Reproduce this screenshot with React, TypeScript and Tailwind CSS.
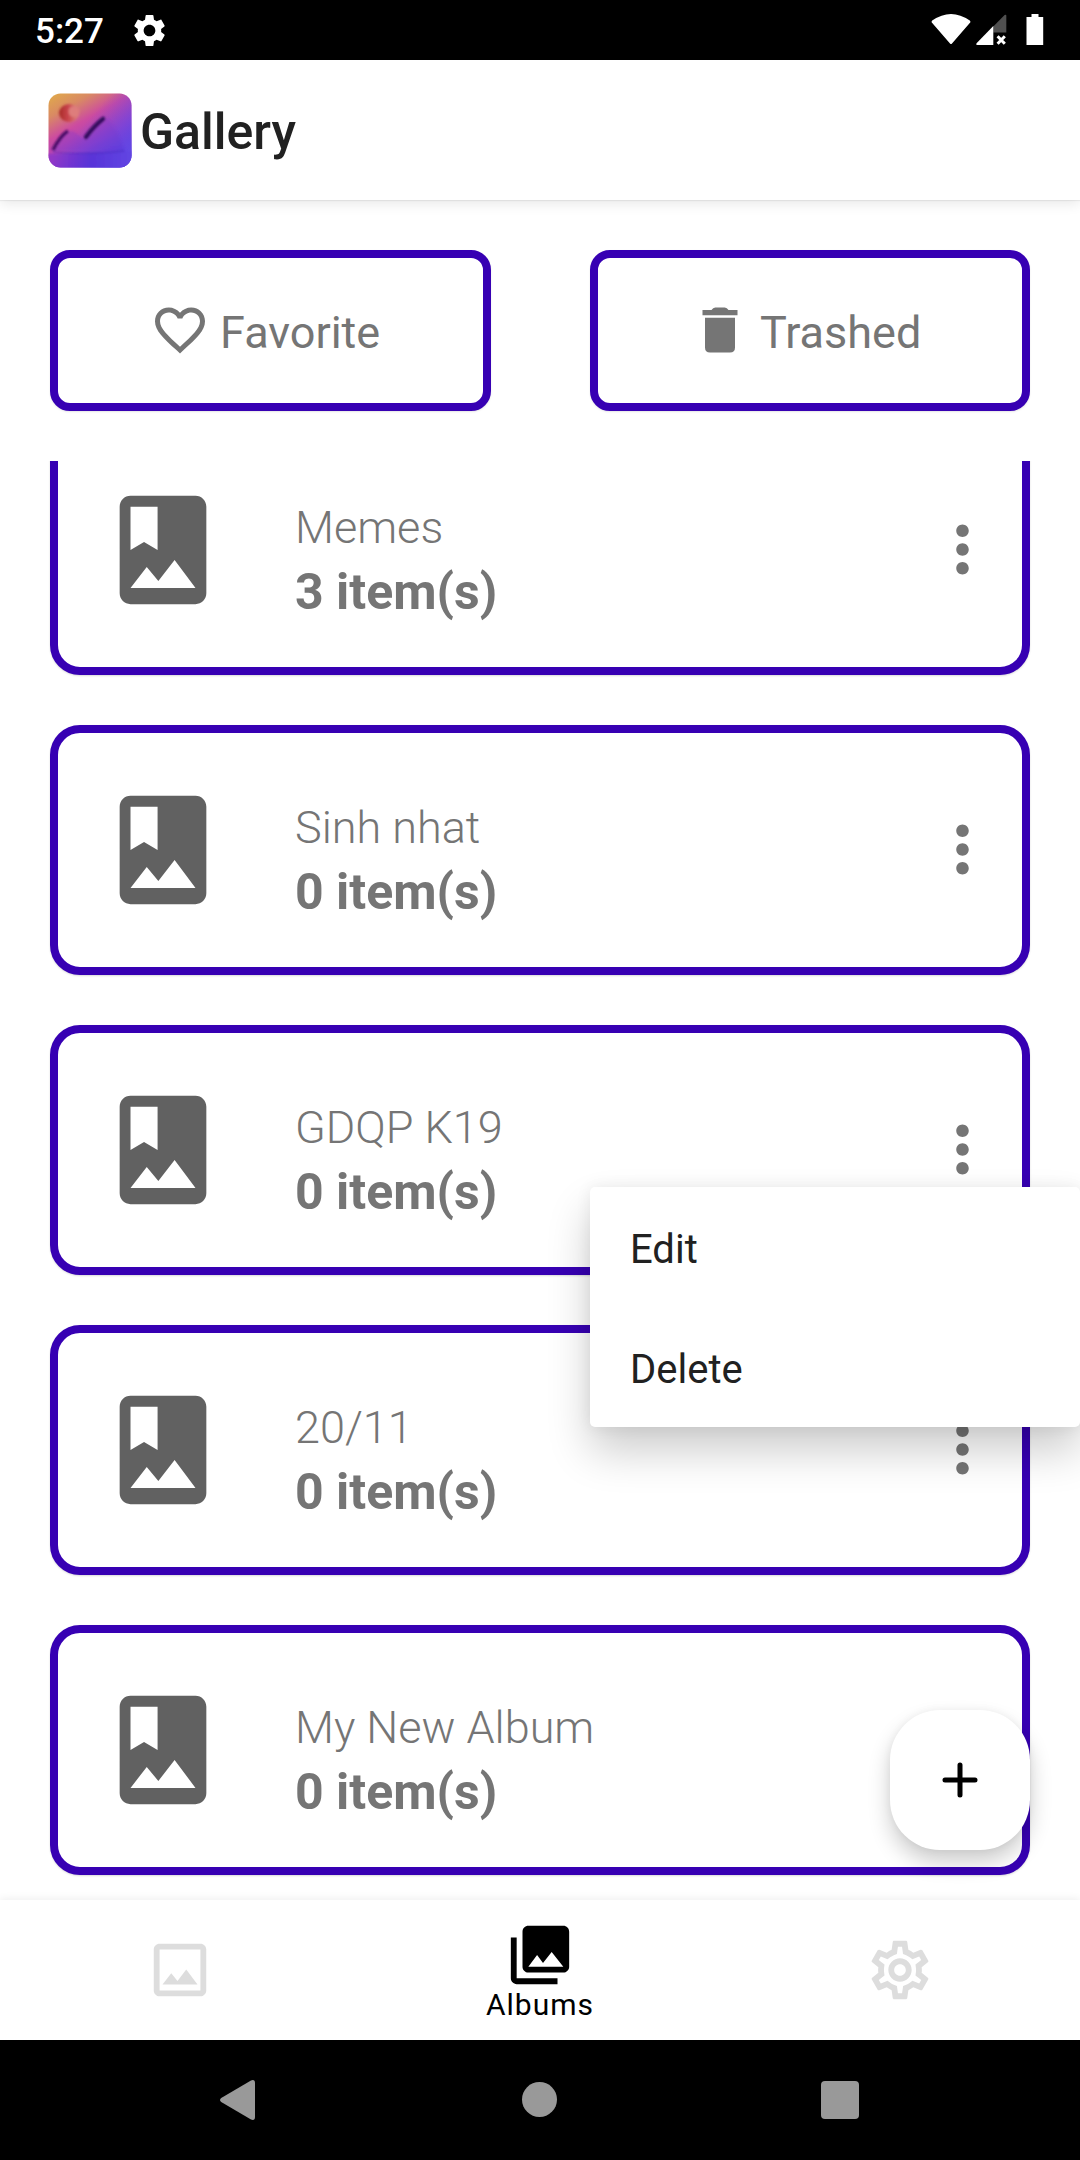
import type { ReactNode } from "react";

const albums = [
  { name: "Memes", count: 3 },
  { name: "Sinh nhat", count: 0 },
  { name: "GDQP K19", count: 0 },
  { name: "20/11", count: 0 },
  { name: "My New Album", count: 0 },
];

const GEAR =
  "M19.14 12.94c.04-.3.06-.61.06-.94 0-.32-.02-.64-.07-.94l2.03-1.58c.18-.14.23-.41.12-.61l-1.92-3.32c-.12-.22-.37-.29-.59-.22l-2.39.96c-.5-.38-1.03-.7-1.62-.94l-.36-2.54c-.04-.24-.24-.41-.48-.41h-3.84c-.24 0-.43.17-.47.41l-.36 2.54c-.59.24-1.13.57-1.62.94l-2.39-.96c-.22-.08-.47 0-.59.22L2.74 8.87c-.12.21-.08.47.12.61l2.03 1.58c-.05.3-.09.63-.09.94s.02.64.07.94l-2.03 1.58c-.18.14-.23.41-.12.61l1.92 3.32c.12.22.37.29.59.22l2.39-.96c.5.38 1.03.7 1.62.94l.36 2.54c.05.24.24.41.48.41h3.84c.24 0 .44-.17.47-.41l.36-2.54c.59-.24 1.13-.56 1.62-.94l2.39.96c.22.08.47 0 .59-.22l1.92-3.32c.12-.22.07-.47-.12-.61l-2.01-1.58zM12 15.6c-1.98 0-3.6-1.62-3.6-3.6s1.62-3.6 3.6-3.6 3.6 1.62 3.6 3.6-1.62 3.6-3.6 3.6z";

const GEAR_OUTLINE =
  "M19.43 12.98c.04-.32.07-.64.07-.98 0-.34-.03-.66-.07-.98l2.11-1.65c.19-.15.24-.42.12-.64l-2-3.46c-.09-.16-.26-.25-.44-.25-.06 0-.12.01-.17.03l-2.49 1c-.52-.4-1.08-.73-1.69-.98l-.38-2.65C14.46 2.18 14.25 2 14 2h-4c-.25 0-.46.18-.49.42l-.38 2.65c-.61.25-1.17.59-1.69.98l-2.49-1c-.06-.02-.12-.03-.18-.03-.17 0-.34.09-.43.25l-2 3.46c-.13.22-.07.49.12.64l2.11 1.65c-.04.32-.07.65-.07.98 0 .33.03.66.07.98l-2.11 1.65c-.19.15-.24.42-.12.64l2 3.46c.09.16.26.25.44.25.06 0 .12-.01.17-.03l2.49-1c.52.4 1.08.73 1.69.98l.38 2.65c.03.24.24.42.49.42h4c.25 0 .46-.18.49-.42l.38-2.65c.61-.25 1.17-.59 1.69-.98l2.49 1c.06.02.12.03.18.03.17 0 .34-.09.43-.25l2-3.46c.12-.22.07-.49-.12-.64l-2.11-1.65zm-1.98-1.71c.04.31.05.52.05.73 0 .21-.02.43-.05.73l-.14 1.13.89.7 1.08.84-.7 1.21-1.27-.51-1.04-.42-.9.68c-.43.32-.84.56-1.25.73l-1.06.43-.16 1.13-.2 1.35h-1.4l-.19-1.35-.16-1.13-1.06-.43c-.43-.18-.83-.41-1.23-.71l-.91-.7-1.06.43-1.27.51-.7-1.21 1.08-.84.89-.7-.14-1.13c-.03-.31-.05-.54-.05-.74s.02-.43.05-.73l.14-1.13-.89-.7-1.08-.84.7-1.21 1.27.51 1.04.42.9-.68c.43-.32.84-.56 1.25-.73l1.06-.43.16-1.13.2-1.35h1.39l.19 1.35.16 1.13 1.06.43c.43.18.83.41 1.23.71l.91.7 1.06-.43 1.27-.51.7 1.21-1.07.85-.89.7.14 1.13zM12 8c-2.21 0-4 1.79-4 4s1.79 4 4 4 4-1.79 4-4-1.79-4-4-4zm0 6c-1.1 0-2-.9-2-2s.9-2 2-2 2 .9 2 2-.9 2-2 2z";

function Icon({ className, children }: { className: string; children: ReactNode }) {
  return (
    <svg viewBox="0 0 24 24" fill="currentColor" className={`block shrink-0 ${className}`}>
      {children}
    </svg>
  );
}

function StatusBar() {
  return (
    <div className="flex h-[60px] items-center bg-black pl-[35px] pr-[36px] text-white">
      <span className="pt-[3px] text-[35px] font-medium leading-[40px]">5:27</span>
      <Icon className="ml-[26px] h-[39px] w-[39px]">
        <path d={GEAR} />
      </Icon>
      <div className="ml-auto flex items-center">
        <svg viewBox="0 0 40 32" className="h-8 w-10 fill-white">
          <path d="M1.2 6.6Q20-6.6 38.8 6.6Q39.8 7.6 39.2 8.600L21 29.400Q20 30.600 19 29.400L0.8 8.600Q0.2 7.600 1.2 6.600Z" />
        </svg>
        <svg viewBox="0 0 32 32" className="ml-[5px] h-8 w-8">
          <path d="M17.3 12.400L28.6 1Q30.3 0 30.3 1.800V18.600H17.3Z" fill="#505050" />
          <path d="M17.3 12V31H1.5Q-.8 31 .8 29Z" fill="#fff" />
          <path d="M21.6 22.300L28.800 29.700M28.800 22.300L21.600 29.700" stroke="#fff" strokeWidth="3" />
        </svg>
        <svg viewBox="0 0 18 32" className="ml-[18px] h-8 w-[18px] fill-white">
          <path d="M5.5 0h7v3h4.7v28H.5V3h5Z" />
        </svg>
      </div>
    </div>
  );
}

function AppLogo() {
  return (
    <svg viewBox="0 0 84 75" className="block h-[75px] w-[84px]">
      <defs>
        <linearGradient id="base" x1="0.08" y1="0" x2="0.72" y2="1">
          <stop offset="0" stopColor="#e0a84c" />
          <stop offset="0.2" stopColor="#d98a63" />
          <stop offset="0.42" stopColor="#cc4ba0" />
          <stop offset="0.68" stopColor="#a03fc4" />
          <stop offset="1" stopColor="#5430da" />
        </linearGradient>
        <linearGradient id="cool" x1="0.35" y1="0.25" x2="1" y2="0.75">
          <stop offset="0.2" stopColor="#6a45e0" stopOpacity="0" />
          <stop offset="1" stopColor="#6348e4" />
        </linearGradient>
        <linearGradient id="ground" x1="0" y1="0" x2="1" y2="0">
          <stop offset="0" stopColor="#8f35c8" />
          <stop offset="0.5" stopColor="#4f2ed6" />
          <stop offset="1" stopColor="#6346e2" />
        </linearGradient>
        <linearGradient id="hill" x1="0" y1="0" x2="1" y2="1">
          <stop offset="0" stopColor="#b63fb8" />
          <stop offset="1" stopColor="#5238dc" />
        </linearGradient>
        <linearGradient id="ball" x1="0" y1="0" x2="1" y2="0">
          <stop offset="0" stopColor="#a82a28" />
          <stop offset="0.45" stopColor="#c9444c" />
          <stop offset="1" stopColor="#e08a84" />
        </linearGradient>
        <filter id="soft" x="-30%" y="-30%" width="160%" height="160%">
          <feGaussianBlur stdDeviation="1.2" />
        </filter>
        <clipPath id="tile">
          <rect x="0.5" y="0.5" width="83" height="74" rx="12" />
        </clipPath>
      </defs>
      <g clipPath="url(#tile)">
        <rect width="84" height="75" fill="url(#base)" />
        <rect width="84" height="75" fill="url(#cool)" />
        <g filter="url(#soft)">
          <path d="M4 58C12 46 17 37 23 38C29 39 32 45 37 46C44 38 52 25 58 25C65 27 72 45 78 59Z" fill="url(#hill)" opacity="0.45" />
          <path d="M-4 61Q40 60 88 58V80H-4Z" fill="url(#ground)" opacity="0.7" />
          <path d="M5 59Q40 62 76 58" stroke="#4326b8" strokeWidth="1.5" fill="none" opacity="0.5" />
          <path d="M5 57Q12 43 20 38" stroke="#4c0f68" strokeWidth="3.6" fill="none" />
          <path d="M38 44Q46 33 55 26" stroke="#35105f" strokeWidth="4.6" strokeLinecap="round" fill="none" />
          <ellipse cx="21" cy="20" rx="10" ry="9" fill="url(#ball)" />
          <circle cx="26" cy="18.500" r="5.500" fill="#de7d7c" />
        </g>
      </g>
    </svg>
  );
}

function Shortcut({ label, className, children }: { label: string; className: string; children: ReactNode }) {
  return (
    <button
      className={`flex h-[161px] items-center rounded-[20px] border-8 border-[#3700b3] bg-white pl-[92px] text-[#757575] shadow-[0_1px_2px_rgba(0,0,0,0.1)] ${className}`}
    >
      <Icon className="-mt-[2px] h-[60px] w-[60px]">{children}</Icon>
      <span className="ml-[10px] pt-[4px] text-[45px] leading-[60px]">{label}</span>
    </button>
  );
}

function AlbumCard({ name, count }: { name: string; count: number }) {
  return (
    <div className="flex h-[250px] shrink-0 rounded-[30px] border-8 border-[#3700b3] bg-white pl-[40px] pr-[22px] text-[#757575] shadow-[0_1px_2px_rgba(0,0,0,0.15)]">
      <Icon className="mt-[52px] h-[130px] w-[130px] text-[#616161]">
        <path d="M18 2H6c-1.1 0-2 .9-2 2v16c0 1.1.9 2 2 2h12c1.1 0 2-.9 2-2V4c0-1.1-.9-2-2-2zM6 4h5v8l-2.5-1.5L6 12V4zm0 15l3-3.86 2.14 2.58 3-3.86L18 19H6z" />
      </Icon>
      <div className="ml-[67px] flex-1 pt-[65px]">
        <div className="text-[45px] font-[350] leading-[60px]">{name}</div>
        <div className="mt-[1px] text-[50px] font-bold leading-[66px]">{count} item(s)</div>
      </div>
      <Icon className="mt-[79px] h-[75px] w-[75px]">
        <path d="M12 8c1.100 0 2-.9 2-2s-.9-2-2-2-2 .9-2 2 .9 2 2 2zm0 2c-1.100 0-2 .9-2 2s.9 2 2 2 2-.9 2-2-.9-2-2-2zm0 6c-1.100 0-2 .9-2 2s.9 2 2 2 2-.9 2-2-.9-2-2-2z" />
      </Icon>
    </div>
  );
}

export default function App() {
  return (
    <div className="relative flex h-[2160px] w-[1080px] flex-col overflow-hidden bg-white font-[Roboto,sans-serif]">
      <StatusBar />

      <header className="z-10 flex h-[140px] shrink-0 items-center bg-white pl-[48px] shadow-[0_1px_1px_rgba(0,0,0,0.06),0_4px_12px_rgba(0,0,0,0.09)]">
        <AppLogo />
        <h1 className="ml-[8px] pt-[4px] text-[50px] font-medium leading-[60px] text-[#212121]">Gallery</h1>
      </header>

      <div className="flex shrink-0 justify-between px-[50px] py-[50px]">
        <Shortcut label="Favorite" className="w-[441px]">
          <path d="M16.5 3c-1.740 0-3.410.81-4.500 2.090C10.910 3.810 9.240 3 7.500 3 4.420 3 2 5.420 2 8.500c0 3.780 3.400 6.860 8.550 11.540L12 21.350l1.450-1.320C18.600 15.360 22 12.280 22 8.500 22 5.420 19.580 3 16.500 3zm-4.400 15.550l-.1.1-.1-.1C7.140 14.240 4 11.390 4 8.500 4 6.500 5.500 5 7.500 5c1.540 0 3.040.99 3.570 2.360h1.870C13.460 5.990 14.960 5 16.500 5c2 0 3.500 1.500 3.500 3.500 0 2.890-3.140 5.740-7.900 10.050z" />
        </Shortcut>
        <Shortcut label="Trashed" className="w-[440px]">
          <path d="M5 4h3.600q.6-1 1.500-1h3.800q.9 0 1.500 1H19v2.100H5zM6 7.100h12V19q0 2-2 2H8q-2 0-2-2z" />
        </Shortcut>
      </div>

      <main className="h-[1439px] shrink-0 overflow-hidden px-[50px]">
        <div className="-mt-9 flex flex-col gap-[50px]">
          {albums.map((a) => (
            <AlbumCard key={a.name} name={a.name} count={a.count} />
          ))}
        </div>
      </main>

      <nav className="z-10 grid h-[140px] shrink-0 grid-cols-[360px_360px_360px] bg-white text-[#dddddd] shadow-[0_-1px_8px_rgba(0,0,0,0.07)]">
        <div className="flex items-center justify-center">
          <Icon className="h-[70px] w-[70px]">
            <path d="M19 5v14H5V5h14m0-2H5c-1.100 0-2 .9-2 2v14c0 1.100.9 2 2 2h14c1.100 0 2-.9 2-2V5c0-1.100-.9-2-2-2zm-4.860 8.860l-3 3.870L9 13.140 6 17h12l-3.860-5.140z" />
          </Icon>
        </div>
        <div className="flex flex-col items-center pt-[20px] text-black">
          <Icon className="h-[70px] w-[70px]">
            <path d="M22 16V4c0-1.100-.9-2-2-2H8c-1.100 0-2 .9-2 2v12c0 1.100.9 2 2 2h12c1.100 0 2-.9 2-2zm-11-4l2.030 2.710L16 11l4 5H8l3-4zM2 6v14c0 1.100.9 2 2 2h14v-2H4V6H2z" />
          </Icon>
          <span className="-mt-[5px] text-[30px] leading-[40px] tracking-[1px]">Albums</span>
        </div>
        <div className="flex items-center justify-center">
          <Icon className="h-[70px] w-[70px]">
            <path d={GEAR_OUTLINE} />
          </Icon>
        </div>
      </nav>

      <div className="z-10 flex h-[120px] shrink-0 items-center justify-between bg-black pl-[220px] pr-[221px]">
        <svg viewBox="0 0 35 40" className="h-10 w-[35px] fill-[#999999]">
          <path d="M1.200 18L31 .4Q35-.9 35 3V37Q35 40.900 31 39.600L1.200 22Q-1.200 20 1.200 18Z" />
        </svg>
        <div className="-mt-[1px] ml-[2px] h-[35px] w-[35px] rounded-full bg-[#999999]" />
        <div className="h-[38px] w-[38px] rounded-[4px] bg-[#999999]" />
      </div>

      <button className="absolute left-[890px] top-[1710px] flex h-[140px] w-[140px] items-center justify-center rounded-[50px] bg-white shadow-[0_12px_22px_rgba(0,0,0,0.2),0_0_8px_rgba(0,0,0,0.05)]">
        <svg viewBox="0 0 36 36" className="h-9 w-9" stroke="#000" strokeWidth="5" strokeLinecap="round">
          <path d="M18 3V33M3 18H33" />
        </svg>
      </button>

      <div className="absolute left-[590px] top-[1187px] flex h-[240px] w-[490px] flex-col rounded-[5px] bg-white pl-[40px] text-[40px] text-[#212121] shadow-[0_24px_44px_rgba(0,0,0,0.2),0_0_16px_rgba(0,0,0,0.07)]">
        <div className="flex h-[120px] items-center pt-[6px]">Edit</div>
        <div className="flex h-[120px] items-center pt-[6px]">Delete</div>
      </div>
    </div>
  );
}
